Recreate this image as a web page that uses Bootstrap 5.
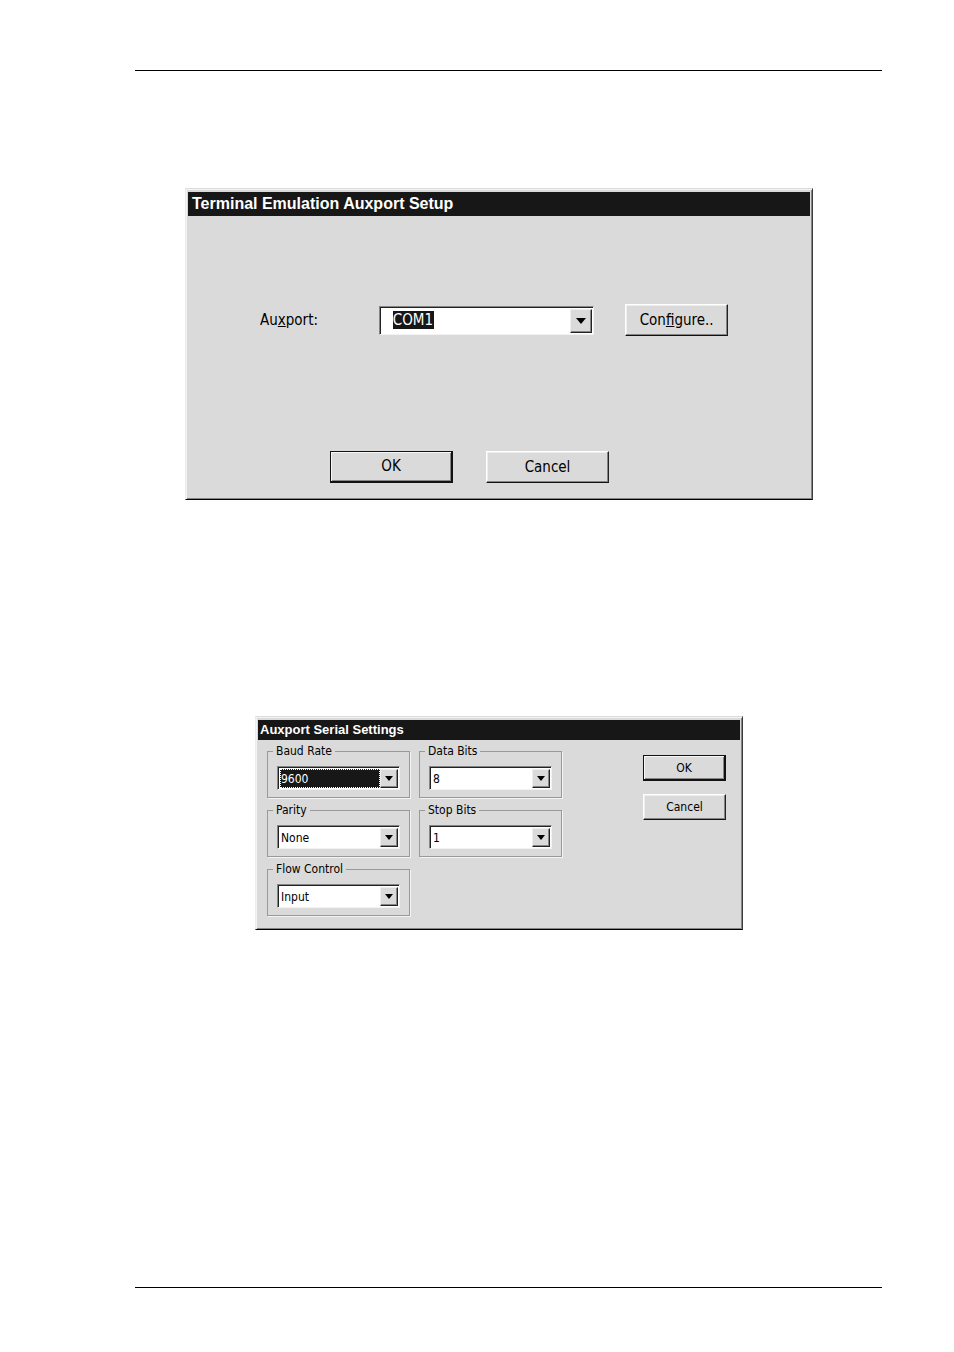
<!DOCTYPE html>
<html lang="en">
<head>
<meta charset="utf-8">
<meta name="viewport" content="width=device-width, initial-scale=1">
<title>Auxport Setup</title>
<link href="https://cdn.jsdelivr.net/npm/bootstrap@5.3.0/dist/css/bootstrap.min.css" rel="stylesheet">
<style>
  body { background: #fff; color: #000; font-family: "DejaVu Sans Condensed", "DejaVu Sans", sans-serif; font-variant-ligatures: none; }
  .sheet { padding: 70px 72px 64px 135px; }
  .sheet-rule { border: 0; border-top: 1px solid #000; opacity: 1; margin: 0; }
  .sheet-body { padding: 117px 19px 0 0; }

  /* Classic raised dialog frame */
  .dialog { background: #dadada; border: 1px solid; border-color: #dadada #3c3c3c #000 #ececec; box-shadow: inset 1px 1px #f4f4f4, inset -1px -1px #858585; padding: 3px 2px 2px; width: 100%; }
  .dialog-title { background: #171717; color: #fff; font-family: "Liberation Sans", Arial, sans-serif; font-weight: 700; margin: 0; padding-left: 4px; }
  .dialog-port { max-width: 628px; font-size: 15px; }
  .dialog-port .dialog-title { font-size: 16px; line-height: 24px; }
  .dialog-serial { max-width: 488px; margin-top: 216px; font-size: 12px; }
  .dialog-serial .dialog-title { font-size: 13px; line-height: 20px; padding-left: 2px; }

  .port-row { padding: 88px 82px 0 72px; }
  .port-row label { width: 119px; }
  .port-row .combo { margin-right: 31px; }
  .port-actions { gap: 33px; padding: 115px 0 14px 142px; }
  .serial-body { padding: 3px 14px 11px 9px; }
  .serial-groups { display: grid; grid-template-columns: 143px 143px; gap: 4px 9px; }
  .serial-actions { gap: 13px; padding-top: 12px; width: 83px; }

  /* Push buttons */
  .push { background: #dadada; border: 1px solid; border-color: #fff #222 #111 #fff; box-shadow: inset -1px -1px #858585, inset 1px 1px #eee; color: #000; padding: 0; font-size: inherit; line-height: 1; height: 32px; }
  .push.default { border-color: #111; border-right-width: 2px; border-bottom-width: 2px; box-shadow: inset 1px 1px #f8f8f8, inset -1px -1px #858585; }
  .push-wide { width: 123px; }
  .push-config { width: 103px; }
  .dialog-serial .push { height: 26px; width: 83px; }

  /* Drop-down lists */
  .combo { background: #fff; border: 1px solid; border-color: #858585 #f2f2f2 #f2f2f2 #858585; box-shadow: inset 1px 1px #222; display: flex; padding: 2px 1px 1px 2px; height: 24px; }
  .combo select { appearance: none; background: transparent; border: 0; border-radius: 0; color: inherit; flex: 1; font: inherit; min-width: 0; padding: 0 0 0 1px; outline: 0; }
  .combo-arrow { background: #dadada; border: 1px solid; border-color: #eee #222 #222 #eee; box-shadow: inset -1px -1px #858585; display: flex; align-items: center; justify-content: center; pointer-events: none; width: 18px; }
  .combo-port { height: 29px; width: 216px; }
  .combo-port select { background: linear-gradient(#171717, #171717) 11px 2px / 41px 18px no-repeat; color: #fff; padding-left: 11px; }
  .combo-port .combo-arrow { width: 22px; }
  .combo select.picked { background: #171717; color: #fff; outline: 1px dotted #fff; outline-offset: -1px; }
  option { background: #fff; color: #000; }

  .group { border: 1px solid #999; box-shadow: 1px 1px #f4f4f4; padding: 7px 9px 7px; }
  .group legend { float: none; width: auto; font-size: 12px; line-height: 16px; margin: 0 0 0 -4px; padding: 0 3px; }
</style>
</head>
<body>
<div class="sheet d-flex flex-column min-vh-100">
  <hr class="sheet-rule">
  <main class="sheet-body flex-grow-1 d-flex flex-column align-items-center">

    <form class="dialog dialog-port">
      <h1 class="dialog-title">Terminal Emulation Auxport Setup</h1>
      <div class="port-row d-flex align-items-center">
        <label for="auxport">Au<u>x</u>port:</label>
        <div class="combo combo-port">
          <select id="auxport"><option>COM1</option><option>COM2</option></select>
          <span class="combo-arrow" aria-hidden="true"><svg width="10" height="6" viewBox="0 0 10 6"><path d="M0 0h10L5 6z" fill="#000"/></svg></span>
        </div>
        <button type="button" class="push push-config">Con<u>f</u>igure..</button>
      </div>
      <div class="port-actions d-flex">
        <button type="button" class="push push-wide default">OK</button>
        <button type="button" class="push push-wide">Cancel</button>
      </div>
    </form>

    <form class="dialog dialog-serial">
      <h2 class="dialog-title">Auxport Serial Settings</h2>
      <div class="serial-body d-flex justify-content-between">
        <div class="serial-groups">
          <fieldset class="group">
            <legend id="l-baud">Baud Rate</legend>
            <div class="combo"><select class="picked" aria-labelledby="l-baud"><option>9600</option><option>19200</option></select><span class="combo-arrow" aria-hidden="true"><svg width="8" height="5" viewBox="0 0 8 5"><path d="M0 0h8L4 5z" fill="#000"/></svg></span></div>
          </fieldset>
          <fieldset class="group">
            <legend id="l-data">Data Bits</legend>
            <div class="combo"><select aria-labelledby="l-data"><option>8</option><option>7</option></select><span class="combo-arrow" aria-hidden="true"><svg width="8" height="5" viewBox="0 0 8 5"><path d="M0 0h8L4 5z" fill="#000"/></svg></span></div>
          </fieldset>
          <fieldset class="group">
            <legend id="l-parity">Parity</legend>
            <div class="combo"><select aria-labelledby="l-parity"><option>None</option><option>Odd</option><option>Even</option></select><span class="combo-arrow" aria-hidden="true"><svg width="8" height="5" viewBox="0 0 8 5"><path d="M0 0h8L4 5z" fill="#000"/></svg></span></div>
          </fieldset>
          <fieldset class="group">
            <legend id="l-stop">Stop Bits</legend>
            <div class="combo"><select aria-labelledby="l-stop"><option>1</option><option>2</option></select><span class="combo-arrow" aria-hidden="true"><svg width="8" height="5" viewBox="0 0 8 5"><path d="M0 0h8L4 5z" fill="#000"/></svg></span></div>
          </fieldset>
          <fieldset class="group">
            <legend id="l-flow">Flow Control</legend>
            <div class="combo"><select aria-labelledby="l-flow"><option>Input</option><option>Output</option></select><span class="combo-arrow" aria-hidden="true"><svg width="8" height="5" viewBox="0 0 8 5"><path d="M0 0h8L4 5z" fill="#000"/></svg></span></div>
          </fieldset>
        </div>
        <div class="serial-actions d-flex flex-column">
          <button type="button" class="push default">OK</button>
          <button type="button" class="push">Cancel</button>
        </div>
      </div>
    </form>
  </main>
  <hr class="sheet-rule">
</div>
<script src="https://cdn.jsdelivr.net/npm/bootstrap@5.3.0/dist/js/bootstrap.bundle.min.js"></script>
</body>
</html>
